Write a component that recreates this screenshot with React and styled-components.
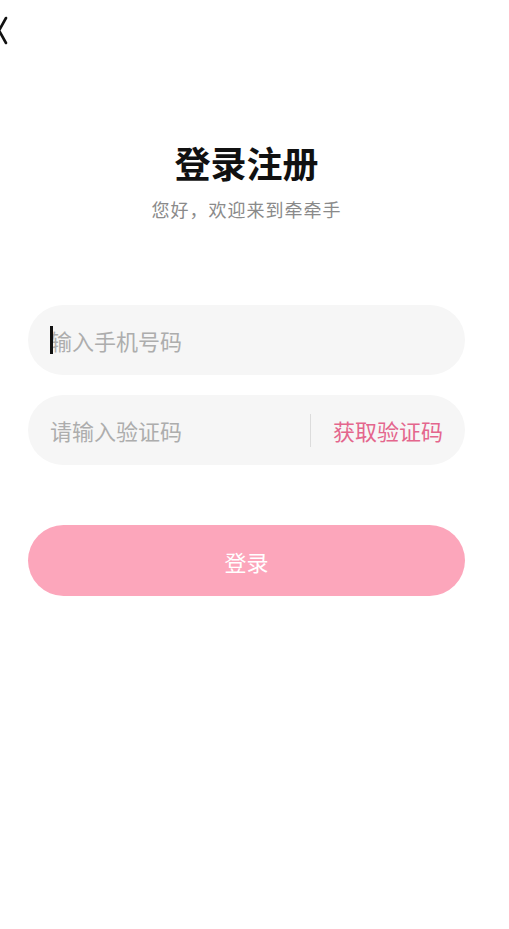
import styled, { createGlobalStyle } from "styled-components";

const GlobalStyle = createGlobalStyle`
  html, body {
    margin: 0;
    padding: 0;
    background: #ffffff;
  }
  body {
    font-family: "Noto Sans CJK SC", "Noto Sans", sans-serif;
  }
`;

const Page = styled.div`
  width: 509px;
  min-height: 929px;
  box-sizing: border-box;
  padding: 0 44px 0 28px;
  background: #ffffff;
`;

const TopBar = styled.div`
  height: 60px;
  margin-left: -28px;
  display: flex;
  align-items: flex-start;
`;

const BackIcon = styled.svg`
  display: block;
  overflow: visible;
`;

const Header = styled.header`
  display: flex;
  flex-direction: column;
  align-items: center;
  margin-top: 81px;
`;

const Title = styled.h1`
  margin: 0;
  font-size: 36px;
  line-height: 42px;
  font-weight: 700;
  color: #111111;
`;

const Subtitle = styled.p`
  margin: 13px 0 0;
  font-size: 18px;
  line-height: 26px;
  color: #8a8a8a;
  letter-spacing: 1px;
`;

const Form = styled.div`
  margin-top: 83px;
  display: flex;
  flex-direction: column;
  gap: 20px;
`;

const Field = styled.div`
  height: 70px;
  border-radius: 35px;
  background: #f6f6f6;
  display: flex;
  align-items: center;
  padding: 0 22px;
`;

const Caret = styled.span`
  width: 3px;
  height: 28px;
  background: #111111;
  margin-right: -3px;
  position: relative;
  z-index: 1;
`;

const Placeholder = styled.span`
  flex: 1;
  font-size: 22px;
  color: #adadad;
`;

const Divider = styled.span`
  width: 1px;
  height: 33px;
  background: #dcdcdc;
  margin-right: 22px;
`;

const CodeButton = styled.span`
  font-size: 22px;
  color: #e4668d;
`;

const SubmitButton = styled.button`
  margin-top: 40px;
  height: 71px;
  width: 100%;
  border: none;
  border-radius: 36px;
  background: #fca6bb;
  color: #ffffff;
  font-family: inherit;
  font-size: 22px;
`;

export default function App() {
  return (
    <>
      <GlobalStyle />
      <Page>
        <TopBar>
          <BackIcon width="12" height="50" viewBox="0 0 12 50">
            <polyline
              points="6,18 -1,30.5 6,43"
              fill="none"
              stroke="#111"
              strokeWidth="2.6"
              strokeLinecap="round"
              strokeLinejoin="round"
            />
          </BackIcon>
        </TopBar>
        <Header>
          <Title>登录注册</Title>
          <Subtitle>您好，欢迎来到牵牵手</Subtitle>
        </Header>
        <Form>
          <Field>
            <Caret />
            <Placeholder>输入手机号码</Placeholder>
          </Field>
          <Field>
            <Placeholder>请输入验证码</Placeholder>
            <Divider />
            <CodeButton>获取验证码</CodeButton>
          </Field>
          <SubmitButton>登录</SubmitButton>
        </Form>
      </Page>
    </>
  );
}
